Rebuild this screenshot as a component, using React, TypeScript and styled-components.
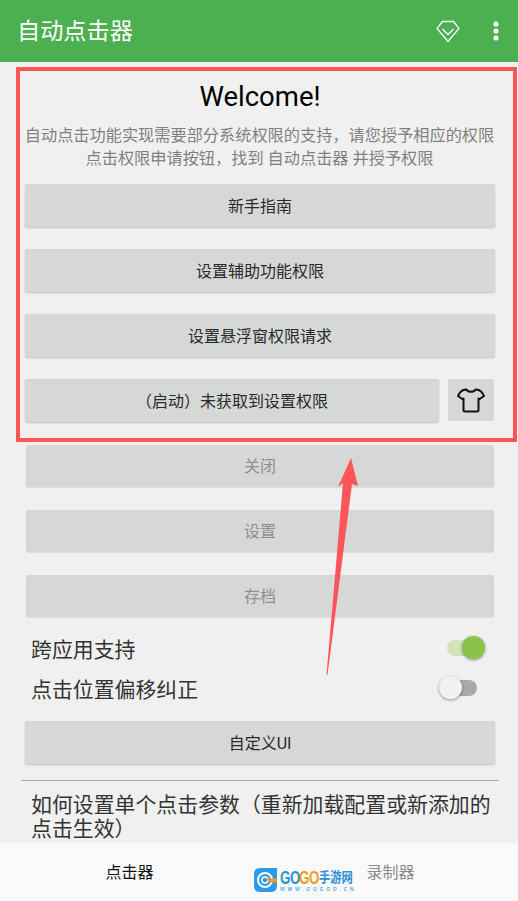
import * as React from 'react'
import styled, { createGlobalStyle } from 'styled-components'

const GlobalStyle = createGlobalStyle`
  html, body {
    margin: 0;
    padding: 0;
    background: #f0f0f0;
  }
  * {
    box-sizing: border-box;
  }
`
const Screen = styled.div`
  position: relative;
  width: 518px;
  height: 901px;
  display: flex;
  flex-direction: column;
  overflow: hidden;
  background: #f0f0f0;
  font-family: Roboto, 'Noto Sans CJK SC', sans-serif;
`
const TopBar = styled.div`
  flex: 0 0 62px;
  display: flex;
  align-items: center;
  padding: 0 19px 0 17px;
  background: #4caf50;
`
const AppTitle = styled.div`
  flex-grow: 1;
  color: #fff;
  font-size: 23.2px;
  line-height: 62px;
`
const TopIcons = styled.div`
  display: flex;
  align-items: center;
  gap: 33px;
`
const Main = styled.div`
  flex: 1 1 0;
  min-height: 0;
  overflow: hidden;
  padding: 0 23px 0 25px;
`
const Welcome = styled.div`
  margin-top: 17px;
  text-align: center;
  color: #000;
  font-size: 27.5px;
  line-height: 36px;
`
const Intro = styled.div`
  margin: 9px -4px 0 -5px;
  text-align: center;
  color: #808080;
  font-size: 16.2px;
  line-height: 23px;
`
const ButtonStack = styled.div`
  display: flex;
  flex-direction: column;
  gap: 22px;
  margin-top: ${({ $top }: { $top: number }) => `${$top}px`};
`
const Button = styled.div<{ $off?: boolean }>`
  flex-grow: 1;
  height: ${({ $off }) => ($off ? '42px' : '43px')};
  margin: ${({ $off }) => ($off ? '1px 1px 0' : '0')};
  padding-bottom: 2px;
  display: flex;
  align-items: center;
  justify-content: center;
  background: #d6d7d7;
  border-radius: 2px;
  color: ${({ $off }) => ($off ? '#8f8f8f' : '#2a2a2a')};
  font-size: 16px;
  box-shadow: ${({ $off }) => ($off ? '0 1px 1px rgba(0, 0, 0, 0.08)' : '0 1px 2px rgba(0, 0, 0, 0.2)')};
`
const ButtonRow = styled.div`
  display: flex;
  gap: 9px;
`
const SkinButton = styled.div`
  flex: 0 0 46px;
  height: 42px;
  margin-right: 1px;
  display: flex;
  align-items: center;
  justify-content: center;
  background: #d6d7d7;
  border-radius: 2px;
`
const SwitchRow = styled.div`
  height: 40px;
  display: flex;
  align-items: center;
  justify-content: space-between;
  margin: 0 17px 0 6px;
  color: #333;
  font-size: 20.9px;
`
const Switches = styled.div`
  margin-top: 11px;
  margin-bottom: 13px;
`
const Track = styled.div<{ $on?: boolean }>`
  position: relative;
  width: 34px;
  height: 16px;
  margin-right: ${({ $on }) => ($on ? '-3px' : '1px')};
  border-radius: 8px;
  background: ${({ $on }) => ($on ? '#d2e4b8' : '#a9a9a9')};
`
const Thumb = styled.div<{ $on?: boolean }>`
  position: absolute;
  top: -4px;
  ${({ $on }) => ($on ? 'right: -4px;' : 'left: -4px;')}
  width: 23px;
  height: 23px;
  border-radius: 50%;
  background: ${({ $on }) => ($on ? '#8bc34a' : '#f1f1f1')};
  box-shadow: 0 1px 3px rgba(0, 0, 0, 0.4);
`
const Divider = styled.div`
  height: 1px;
  margin: 16px -4px 0 -4px;
  background: #a8a8a8;
`
const HelpText = styled.div`
  margin: 12px 0 0 6px;
  color: #333;
  font-size: 20.9px;
  line-height: 24px;
`
const BottomNav = styled.div`
  flex: 0 0 58px;
  display: flex;
  background: #fafafa;
`
const Tab = styled.div<{ $active?: boolean }>`
  flex: 1 1 50%;
  padding-top: 19px;
  padding-left: ${({ $active }) => ($active ? '0' : '4px')};
  text-align: center;
  color: ${({ $active }) => ($active ? '#111' : '#8a8a8a')};
  font-size: 16px;
  line-height: 22px;
`
const Frame = styled.div`
  position: absolute;
  left: 16px;
  top: 67px;
  width: 501px;
  height: 375px;
  border: 4px solid #fe5558;
  border-radius: 1px;
  pointer-events: none;
`
const Arrow = styled.svg`
  position: absolute;
  left: 320px;
  top: 455px;
`
const Watermark = styled.div`
  position: absolute;
  left: 254px;
  top: 868px;
  display: flex;
  align-items: flex-start;
  gap: 3px;
`
const WatermarkText = styled.div`
  display: flex;
  flex-direction: column;
  padding-top: 2px;
  font-family: 'Liberation Sans', 'Noto Sans CJK SC', sans-serif;
`
const WatermarkName = styled.div`
  display: flex;
  align-items: center;
  height: 15px;
  font-weight: 700;
  white-space: nowrap;
`
const LatinPair = styled.span<{ $orange?: boolean }>`
  display: inline-block;
  width: 19px;
  font-size: 19px;
  line-height: 15px;
  letter-spacing: -0.5px;
  color: ${({ $orange }) => ($orange ? '#f39a1e' : '#2f8fd8')};
  transform: scaleX(0.7);
  transform-origin: left center;
`
const CjkName = styled.span`
  font-size: 11.3px;
  line-height: 15px;
  margin-left: 1px;
  color: #2f8fd8;
  transform: scaleY(1.25);
`
const WatermarkUrl = styled.div`
  margin-top: 2px;
  font-size: 5px;
  line-height: 5px;
  letter-spacing: 2.75px;
  font-weight: 700;
  white-space: nowrap;
  color: #5aaee6;
`

const Gem = () => (
  <svg width="24" height="23" viewBox="0 0 24 23" fill="none" stroke="#fff" strokeWidth="1.3">
    <path d="M6.5 1.5 H17.5 L23 8.5 L12 21.5 L1 8.5 Z" />
    <path d="M6.5 9 L12 14.5 L17.5 9" />
  </svg>
)

const MoreDots = () => (
  <svg width="6" height="20" viewBox="0 0 6 20" fill="#fff">
    <circle cx="3" cy="3" r="2.6" />
    <circle cx="3" cy="10" r="2.6" />
    <circle cx="3" cy="17" r="2.6" />
  </svg>
)

const Shirt = () => (
  <svg width="28" height="25" viewBox="0 0 28 25" fill="none" stroke="#111" strokeWidth="2" strokeLinejoin="round">
    <path d="M9.5 1.5 C11 4.5 17 4.5 18.5 1.5 C22 1.5 23.5 2.5 25 4.5 L27 8 L22 11.5 L21.5 10.5 V22 Q21.5 23.5 20 23.5 H8 Q6.5 23.5 6.5 22 V10.5 L6 11.5 L1 8 L3 4.5 C4.5 2.5 6 1.5 9.5 1.5 Z" />
  </svg>
)

const LogoMark = () => (
  <svg width="23" height="24" viewBox="0 0 23 24">
    <path d="M6 0 H23 V18 Q23 24 17 24 H6 Q0 24 0 18 V6 Q0 0 6 0 Z" fill="#2f9be6" />
    <circle cx="11" cy="12" r="7" fill="none" stroke="#fff" strokeWidth="2" />
    <circle cx="11" cy="12" r="3" fill="none" stroke="#fff" strokeWidth="1.5" />
    <path d="M11 10.5 H23 V14.5 H17 Z" fill="#f39a1e" />
  </svg>
)

export default function App() {
  return (
    <Screen>
      <GlobalStyle />
      <TopBar>
        <AppTitle>自动点击器</AppTitle>
        <TopIcons>
          <Gem />
          <MoreDots />
        </TopIcons>
      </TopBar>
      <Main>
        <Welcome>Welcome!</Welcome>
        <Intro>
          自动点击功能实现需要部分系统权限的支持，请您授予相应的权限
          <br />
          点击权限申请按钮，找到 自动点击器 并授予权限
        </Intro>
        <ButtonStack $top={14}>
          <Button>新手指南</Button>
          <Button>设置辅助功能权限</Button>
          <Button>设置悬浮窗权限请求</Button>
          <ButtonRow>
            <Button>（启动）未获取到设置权限</Button>
            <SkinButton>
              <Shirt />
            </SkinButton>
          </ButtonRow>
          <Button $off>关闭</Button>
          <Button $off>设置</Button>
          <Button $off>存档</Button>
        </ButtonStack>
        <Switches>
          <SwitchRow>
            跨应用支持
            <Track $on>
              <Thumb $on />
            </Track>
          </SwitchRow>
          <SwitchRow>
            点击位置偏移纠正
            <Track>
              <Thumb />
            </Track>
          </SwitchRow>
        </Switches>
        <Button>自定义UI</Button>
        <Divider />
        <HelpText>如何设置单个点击参数（重新加载配置或新添加的点击生效）</HelpText>
      </Main>
      <BottomNav>
        <Tab $active>点击器</Tab>
        <Tab>录制器</Tab>
      </BottomNav>
      <Frame />
      <Arrow width="40" height="225" viewBox="0 0 40 225">
        <path d="M31 3 L38 31 L32 29 L7.5 220 L6.5 220 L23 28 L18 32 Z" fill="#fe5558" />
      </Arrow>
      <Watermark>
        <LogoMark />
        <WatermarkText>
          <WatermarkName>
            <LatinPair>GO</LatinPair>
            <LatinPair $orange>GO</LatinPair>
            <CjkName>手游网</CjkName>
          </WatermarkName>
          <WatermarkUrl>WWW.GOGGO.CN</WatermarkUrl>
        </WatermarkText>
      </Watermark>
    </Screen>
  )
}
